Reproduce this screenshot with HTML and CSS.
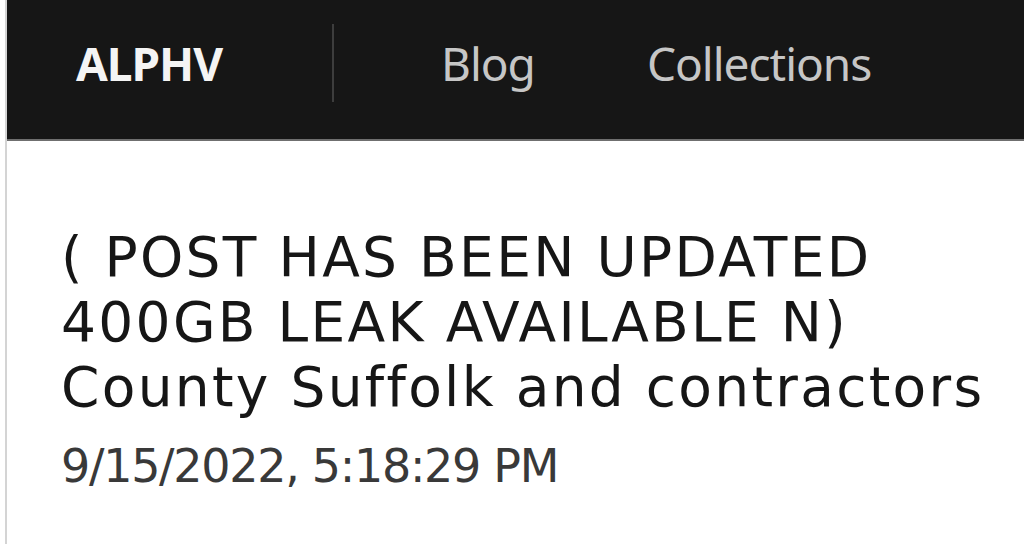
FILE: index.html
```html
<!DOCTYPE html>
<html lang="en">
<head>
<meta charset="utf-8">
<title>ALPHV</title>
<link rel="stylesheet" href="styles.css">
</head>
<body>
<div class="page">
  <header class="topbar">
    <a class="brand" href="#">ALPHV</a>
    <span class="divider"></span>
    <nav class="nav">
      <a class="nav-link nav-blog" href="#">Blog</a>
      <a class="nav-link" href="#">Collections</a>
    </nav>
  </header>
  <main class="post">
    <h1 class="post-title">( POST HAS BEEN UPDATED<br>400GB LEAK AVAILABLE N)<br>County Suffolk and contractors</h1>
    <div class="post-date">9/15/2022, 5:18:29 PM</div>
  </main>
</div>
</body>
</html>
```

FILE: styles.css
```css
html, body {
  margin: 0;
  padding: 0;
  background: #ffffff;
  height: 100%;
  overflow: hidden;
}
body {
  padding-left: 5px;
  font-family: "Noto Sans", "Open Sans", sans-serif;
}
.page {
  border-left: 2px solid #d4d4d4;
  min-height: 544px;
}
.topbar {
  height: 141px;
  background: #161616;
  border-bottom: 2px solid #6f6f6f;
  box-sizing: border-box;
  display: flex;
  align-items: center;
  padding-bottom: 14px;
}
.brand {
  margin-left: 69px;
  width: 256px;
  color: #f4f4f4;
  font-weight: 700;
  font-size: 46px;
  text-decoration: none;
  letter-spacing: -1px;
}
.divider {
  width: 2px;
  height: 78px;
  background: #3d3d3d;
}
.nav {
  display: flex;
  align-items: center;
  margin-left: 107px;
  gap: 112px;
}
.nav-link {
  color: #c6c6c6;
  font-size: 46px;
  text-decoration: none;
  letter-spacing: -1px;
}
.post {
  padding: 84px 0 0 54px;
  color: #161616;
  font-family: "DejaVu Sans", "Noto Sans", sans-serif;
}
.post-title {
  margin: 0;
  font-weight: 400;
  font-size: 55px;
  line-height: 65px;
  letter-spacing: 2.3px;
}
.post-date {
  margin-top: 19px;
  font-size: 46px;
  letter-spacing: -1.3px;
  color: #393939;
}
```
